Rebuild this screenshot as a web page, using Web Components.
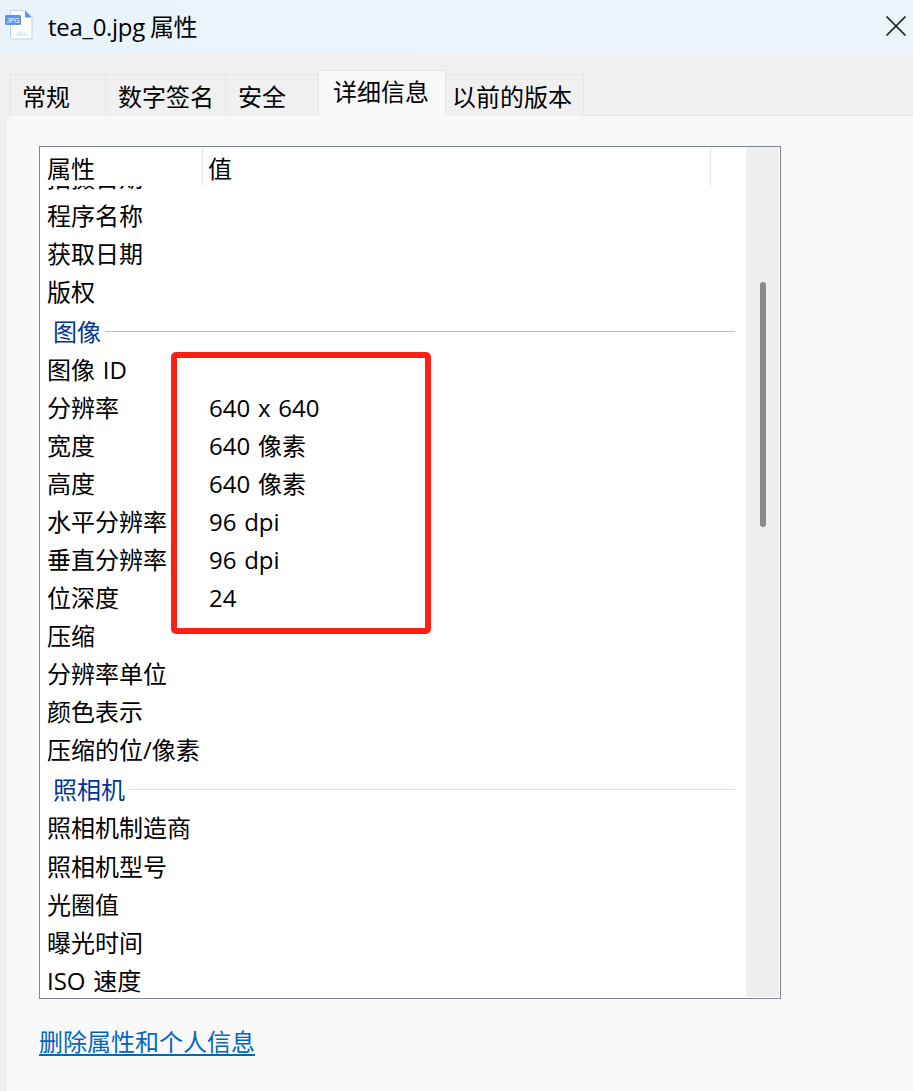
<!DOCTYPE html>
<html lang="zh-CN">
<head>
<meta charset="utf-8">
<title>tea_0.jpg 属性</title>
<style>
html,body{margin:0;padding:0;height:100%;overflow:hidden}
body{font-family:"Open Sans","Noto Sans CJK SC",sans-serif;font-size:24px;color:#000;background:#f0f0f0}
</style>
</head>
<body>
<prop-dialog>
  <prop-titlebar slot="title">tea_0.jpg 属性</prop-titlebar>
  <prop-tabs slot="tabs">
    <prop-tab w="96" pad="11">常规</prop-tab>
    <prop-tab w="120" pad="12">数字签名</prop-tab>
    <prop-tab w="93" pad="12">安全</prop-tab>
    <prop-tab w="128" pad="14" selected>详细信息</prop-tab>
    <prop-tab w="138" pad="6">以前的版本</prop-tab>
  </prop-tabs>
  <prop-list>
    <prop-row>拍摄日期</prop-row>
    <prop-row>程序名称</prop-row>
    <prop-row>获取日期</prop-row>
    <prop-row>版权</prop-row>
    <prop-group strong>图像</prop-group>
    <prop-row>图像 ID</prop-row>
    <prop-row value="640 x 640">分辨率</prop-row>
    <prop-row value="640 像素">宽度</prop-row>
    <prop-row value="640 像素">高度</prop-row>
    <prop-row value="96 dpi">水平分辨率</prop-row>
    <prop-row value="96 dpi">垂直分辨率</prop-row>
    <prop-row value="24">位深度</prop-row>
    <prop-row>压缩</prop-row>
    <prop-row>分辨率单位</prop-row>
    <prop-row>颜色表示</prop-row>
    <prop-row>压缩的位/像素</prop-row>
    <prop-group>照相机</prop-group>
    <prop-row>照相机制造商</prop-row>
    <prop-row>照相机型号</prop-row>
    <prop-row>光圈值</prop-row>
    <prop-row>曝光时间</prop-row>
    <prop-row>ISO 速度</prop-row>
  </prop-list>
  <prop-link slot="footer">删除属性和个人信息</prop-link>
</prop-dialog>
<script>
function def(name, html, extra){
  customElements.define(name, class extends HTMLElement{
    constructor(){super();this.attachShadow({mode:'open'}).innerHTML=html;}
    connectedCallback(){ if(extra) extra.call(this); }
  });
}
def('prop-dialog',`<style>
:host{display:flex;flex-direction:column;width:913px;height:1091px;overflow:hidden;position:relative;background:#f0f0f0}
.panel{flex:1;margin-left:7px;background:#f9f9f9;border-top:1px solid #e5e5e5;padding:30px 0 0 32px;display:flex;flex-direction:column;position:relative}
.foot{margin-top:26px}
.mark{position:absolute;left:164px;top:236px;width:260px;height:282px;box-sizing:border-box;border:6px solid #ff2015;border-radius:5px;pointer-events:none}
</style>
<slot name="title"></slot>
<slot name="tabs"></slot>
<div class="panel"><slot></slot><div class="foot"><slot name="footer"></slot></div><div class="mark"></div></div>`);
def('prop-titlebar',`<style>
:host{display:flex;align-items:center;height:54px;flex:none;background:linear-gradient(90deg,#e9f3fa,#ecf4fa 60%,#edf4f9);padding-left:5px;box-sizing:border-box}
svg.file{width:28px;height:30px;flex:none;margin-top:-4px}
.t{margin-left:15px;flex:1;margin-top:-1px;line-height:1;white-space:nowrap;letter-spacing:-.3px;word-spacing:-1px}
svg.x{flex:none;width:22px;height:22px;margin-right:6px;margin-top:-2px}
</style>
<svg class="file" viewBox="0 0 28 30"><path d="M5.500 .5H20L27 7.500V27.500a1.500 1.500 0 0 1-1.500 1.500H7A1.500 1.500 0 0 1 5.500 27.500Z" fill="#fff" stroke="#b9d2f3"/><path d="M20 .5 27 7.500H20Z" fill="#5f93e6"/><path d="M10 26l4.500-6 3 3 2-2 4.500 5Z" fill="#e3edfa"/><rect x="0" y="5" width="16" height="10" rx="1" fill="#5f93e6"/><text x="8" y="12.500" font-size="6.500" text-anchor="middle" fill="#fff" font-family="Liberation Sans">JPG</text></svg>
<span class="t"><slot></slot></span>
<svg class="x" viewBox="0 0 22 22"><path d="M1.500 1.500 20.500 20.500M20.500 1.500 1.500 20.500" stroke="#1a1a1a" stroke-width="1.700" fill="none"/></svg>`);
def('prop-tabs',`<style>
:host{display:flex;align-items:flex-end;height:62px;flex:none;padding-left:10px;box-sizing:border-box;margin-bottom:-1px;position:relative;z-index:1}
</style><slot></slot>`);
def('prop-tab',`<style>
:host{display:flex;box-sizing:border-box;height:42px;flex:none;border:1px solid #e5e5e5;border-bottom:none;border-left-width:0;padding-top:5px;line-height:34px;white-space:nowrap;background:#f0f0f0}
:host(:first-child){border-left-width:1px}
:host([selected]){height:46px;background:#f9f9f9;padding-top:4px;border-left-width:1px;margin-left:-1px;border-bottom:1px solid #f9f9f9}
</style><slot></slot>`,function(){this.style.width=this.getAttribute('w')+'px';this.style.paddingLeft=this.getAttribute('pad')+'px'});
def('prop-list',`<style>
:host{display:grid;grid-template-columns:1fr 33px;width:742px;height:853px;box-sizing:border-box;border:1px solid #808594;background:#fff;flex:none;padding:0 1px 1px 0}
.main{display:flex;flex-direction:column;min-width:0;overflow:hidden}
.head{display:flex;height:39px;flex:none;background:#fff;position:relative;z-index:1;line-height:44px}
.c1{width:163px;padding-left:7px;box-sizing:border-box;border-right:1px solid #e5e5e5;height:39px;white-space:nowrap}
.c2{width:508px;padding-left:5px;box-sizing:border-box;border-right:1px solid #e5e5e5;height:39px}
.rows{margin-top:-27px}
.bar{background:#efefef;padding-top:135px;display:flex;justify-content:center;align-items:flex-start}
.thumb{width:6px;height:245px;border-radius:3px;background:#8a8a8a;margin-left:1px}
</style>
<div class="main"><div class="head"><div class="c1">属性</div><div class="c2">值</div></div><div class="rows"><slot></slot></div></div>
<div class="bar"><div class="thumb"></div></div>`);
def('prop-row',`<style>
:host{display:flex;height:38.04px;line-height:38px;white-space:nowrap;word-spacing:1.500px}
.n{width:162px;padding-left:7px;box-sizing:border-box;flex:none}
.v{padding-left:7px}
</style><span class="n"><slot></slot></span><span class="v"></span>`,function(){
  this.shadowRoot.querySelector('.v').textContent=this.getAttribute('value')||'';
});
def('prop-group',`<style>
:host{display:flex;align-items:center;height:40px;line-height:40px;color:#003399;padding:2px 0 0 13px;box-sizing:border-box;white-space:nowrap}
.l{flex:1;height:1px;background:#d9deec;margin-top:-2px}
:host([strong]) .l{background:#b4bfd9;margin-top:-1px}
.wrap{width:682px;display:flex;align-items:center;gap:4px;box-sizing:border-box}
</style><div class="wrap"><slot></slot><div class="l"></div></div>`);
def('prop-link',`<style>
:host{display:inline-block;color:#0067c0;line-height:32px;text-decoration:underline;text-underline-offset:3px;white-space:nowrap;cursor:pointer}
</style><slot></slot>`);
</script>
</body>
</html>
